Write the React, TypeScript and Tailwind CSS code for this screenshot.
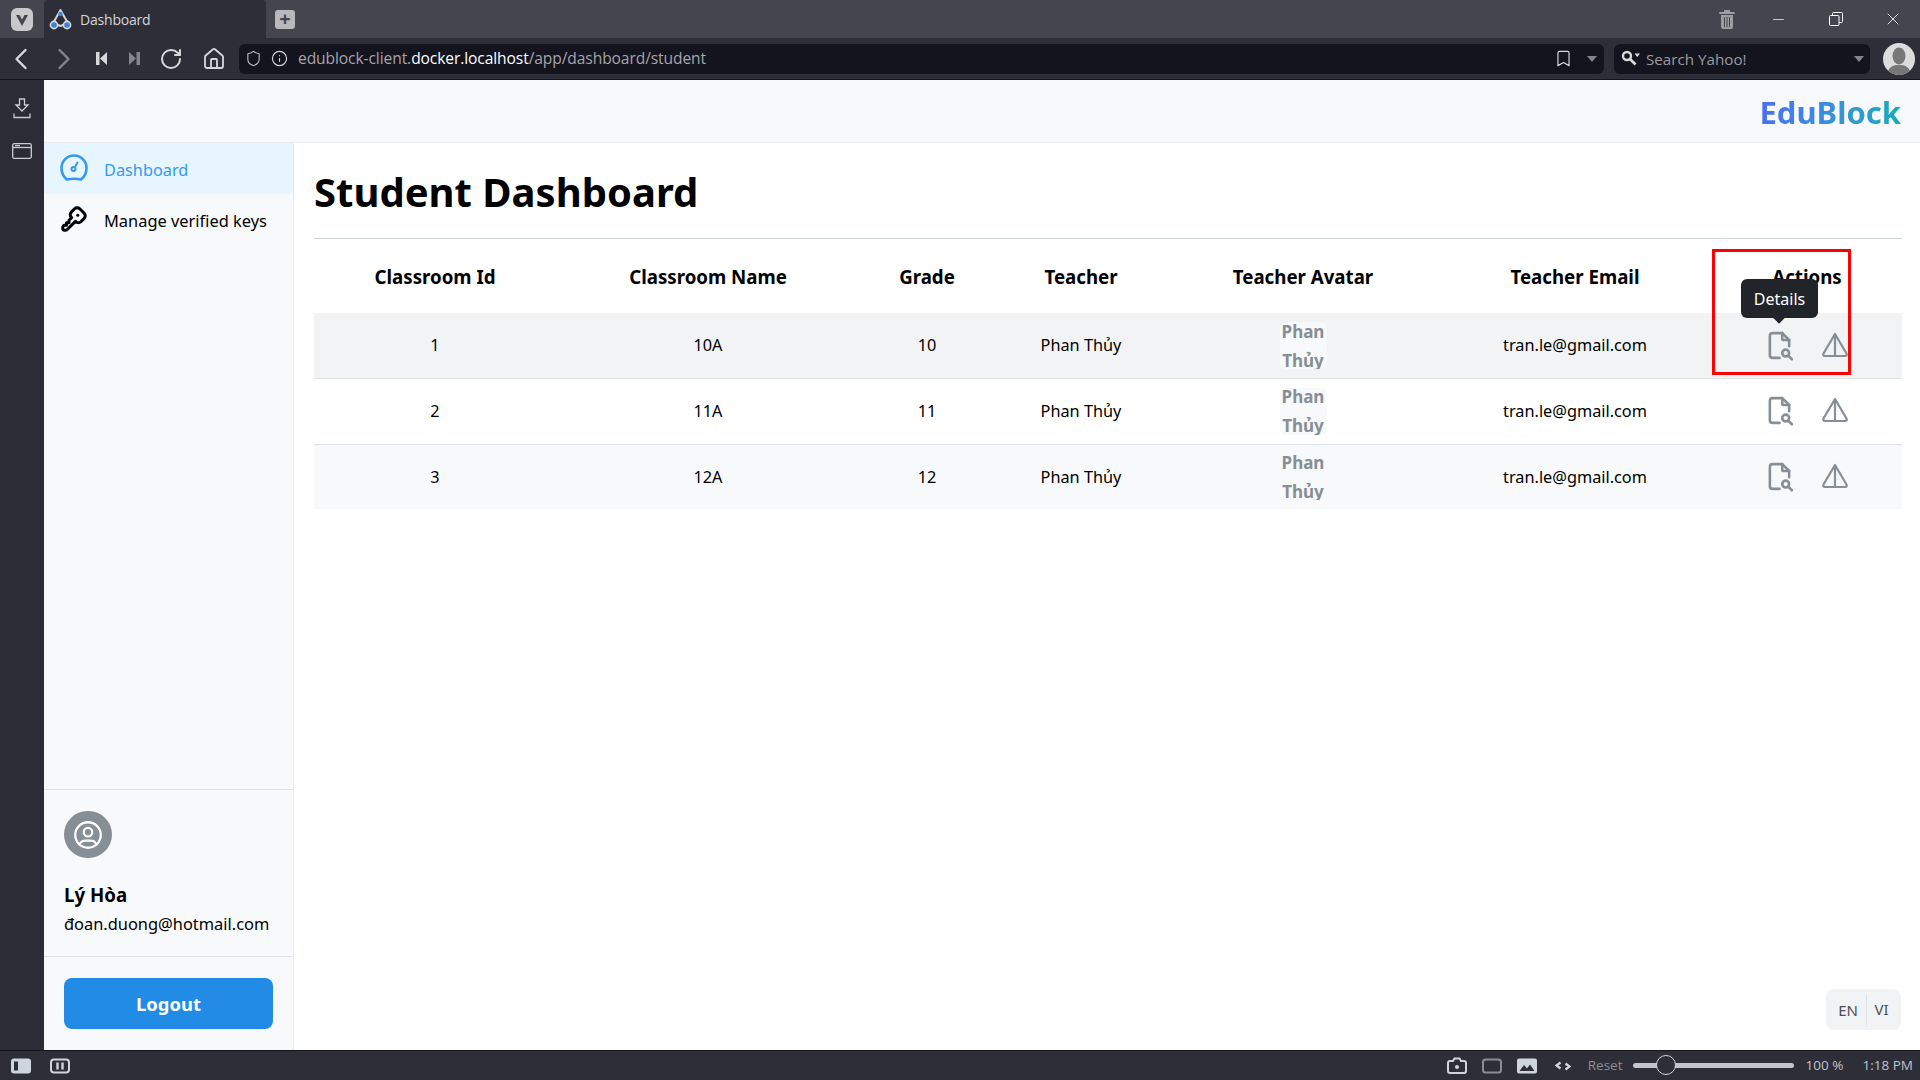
import { TbFileSearch, TbKey, TbUserCircle } from "react-icons/tb";
import {
  Bookmark,
  ChevronLeft,
  ChevronRight,
  House,
  Info,
  Minus,
  RotateCw,
  Shield,
  X,
} from "lucide-react";

const ROWS = [
  { id: 1, name: "10A", grade: 10, bg: "bg-[#f1f3f5]", h: "h-[65.5px] border-b border-[#dee2e6]" },
  { id: 2, name: "11A", grade: 11, bg: "bg-white", h: "h-[65.5px] border-b border-[#dee2e6]" },
  { id: 3, name: "12A", grade: 12, bg: "bg-[#f8f9fa]", h: "h-[65px]" },
];

const HEADERS = [
  "Classroom Id",
  "Classroom Name",
  "Grade",
  "Teacher",
  "Teacher Avatar",
  "Teacher Email",
  "Actions",
];

function TriangleIcon() {
  return (
    <svg width="28" height="28" viewBox="0 0 28 28" fill="none" stroke="#868e96" strokeWidth="2.2" strokeLinejoin="round" className="-mt-[2px]">
      <path d="M14 3 L25.5 22.5 Q26.5 25 24 25 L4 25 Q1.5 25 2.5 22.5 Z" />
      <path d="M14 3 V25" />
    </svg>
  );
}

function GaugeIcon() {
  return (
    <svg width="30" height="30" viewBox="0 0 30 30" fill="none" stroke="#339af0" strokeWidth="2.6" strokeLinecap="round" className="-mt-[2px]">
      <path d="M8 26.5 Q15 25 22 26.5 Q27.5 22.5 27.5 15 A12.5 12.5 0 0 0 2.5 15 Q2.5 22.5 8 26.5 Z" />
      <circle cx="14.5" cy="16" r="2" strokeWidth="2" />
      <path d="M16 14 L18.5 9.5" strokeWidth="2" />
    </svg>
  );
}

function TitleBar() {
  return (
    <div className="h-[38px] flex items-stretch bg-[#45454f]">
      <div className="w-[44px] flex items-center justify-center">
        <svg width="22" height="23" viewBox="0 0 22 23">
          <rect width="22" height="23" rx="6" fill="#c9c9cc" />
          <path d="M5 7 L11 18 L17 7 L13.5 7 L11 11.5 L8.5 7 Z" fill="#45454f" />
        </svg>
      </div>
      <div className="w-[222px] flex items-center bg-[#2e2e38] rounded-t-[4px] pl-[4px]">
        <svg width="25" height="23" viewBox="0 0 25 23" fill="none">
          <path d="M12.5 2 L17 10 L20 15 L12.5 18 L5 15 L8 10 Z" stroke="#d6d6da" strokeWidth="2" strokeLinejoin="round" />
          <circle cx="12.5" cy="6" r="2.2" fill="#3b82d6" />
          <circle cx="6" cy="17" r="3.6" fill="#3b82d6" stroke="#d6d6da" strokeWidth="1.6" />
          <circle cx="19" cy="17" r="3.6" fill="#3b82d6" stroke="#d6d6da" strokeWidth="1.6" />
        </svg>
        <span className="ml-[7px] text-[14px] text-[#d5d5da] font-['Open_Sans',sans-serif] tracking-[-0.2px]">Dashboard</span>
      </div>
      <div className="ml-[9px] flex items-center">
        <div className="w-[20px] h-[19px] bg-[#b9b9bd] rounded-[3px] flex items-center justify-center text-[#45454f] text-[20px] font-bold leading-none">+</div>
      </div>
      <div className="flex-1" />
      <div className="flex items-center text-white pr-[17px]">
        <svg width="18" height="21" viewBox="0 0 18 21" className="mr-[34px]" fill="#9c9ca1">
          <rect x="1" y="3" width="16" height="2" rx="1" />
          <rect x="6" y="1" width="6" height="2" />
          <path d="M3 6 H15 V18 Q15 20 13 20 H5 Q3 20 3 18 Z M6 8 V18 H7 V8 Z M8.5 8 V18 H9.5 V8 Z M11 8 V18 H12 V8 Z" fillRule="evenodd" />
        </svg>
        <Minus size={17} strokeWidth={1} className="mr-[42px]" />
        <svg width="14" height="14" viewBox="0 0 14 14" fill="none" stroke="white" strokeWidth="1" className="mr-[40px]">
          <rect x="0.5" y="3.5" width="9.5" height="10" rx="1" />
          <path d="M3.5 3.5 V1.5 Q3.5 0.5 4.5 0.5 H12.5 Q13.5 0.5 13.5 1.5 V9.5 Q13.5 10.5 12.5 10.5 H10" />
        </svg>
        <X size={20} strokeWidth={1} />
      </div>
    </div>
  );
}

function Toolbar() {
  return (
    <div className="h-[42px] flex items-center bg-[#2e2e38] text-[#d8d8dc] border-b border-[#14141e]">
      <div className="flex items-center pl-[3px] w-[239px]">
        <ChevronLeft size={36} strokeWidth={1.6} />
        <ChevronRight size={36} strokeWidth={1.6} className="ml-[7px] text-[#85858c]" />
        <svg width="12" height="15" viewBox="0 0 12 15" className="ml-[14px]" fill="#d8d8dc">
          <rect x="0" y="1" width="3.5" height="13" />
          <path d="M11 1 V14 L4 7.5 Z" />
        </svg>
        <svg width="12" height="15" viewBox="0 0 12 15" className="ml-[20px]" fill="#85858c">
          <rect x="8.5" y="1" width="3.5" height="13" />
          <path d="M1 1 V14 L8 7.5 Z" />
        </svg>
        <RotateCw size={24} strokeWidth={2} className="ml-[19px]" />
        <House size={24} strokeWidth={1.8} className="ml-[19px]" />
      </div>
      <div className="w-[1365px] h-[30px] rounded-[6px] bg-[#14141e] flex items-center pl-[6px]">
        <Shield size={17} strokeWidth={1.6} className="text-[#b8b8bd]" />
        <Info size={17} strokeWidth={1.6} className="ml-[9px] text-[#d8d8dc]" />
        <span className="ml-[10px] pt-[1px] text-[15.6px] text-[#a5a5ab] font-['Open_Sans',sans-serif] tracking-[-0.1px]">
          edublock-client.<span className="text-white">docker.localhost</span>/app/dashboard/student
        </span>
        <div className="flex-1" />
        <Bookmark size={19} strokeWidth={1.5} className="text-[#d8d8dc]" />
        <div className="ml-[14px] mr-[7px] w-0 h-0 border-x-[5px] border-t-[6px] border-x-transparent border-t-[#85858c]" />
      </div>
      <div className="ml-[10px] w-[256px] h-[30px] rounded-[6px] bg-[#14141e] flex items-center pl-[7px]">
        <svg width="20" height="18" viewBox="0 0 20 18" fill="none" stroke="#d8d8dc">
          <circle cx="6" cy="6" r="4" strokeWidth="2.4" />
          <path d="M9 9 L14.5 14.5" strokeWidth="2.6" />
          <path d="M13.5 3.5 H19 L16.25 7 Z" fill="#d8d8dc" stroke="none" />
        </svg>
        <span className="ml-[5px] pt-[1px] text-[15.2px] text-[#9a9aa0] font-['Open_Sans',sans-serif]">Search Yahoo!</span>
        <div className="flex-1" />
        <div className="mr-[6px] w-0 h-0 border-x-[5px] border-t-[6px] border-x-transparent border-t-[#85858c]" />
      </div>
      <div className="ml-[13px] w-[32px] h-[32px] rounded-full bg-[#dcdcdc] overflow-hidden">
        <svg width="32" height="32" viewBox="0 0 32 32" fill="#777">
          <ellipse cx="16" cy="13" rx="6.5" ry="8.5" />
          <path d="M4 32 Q5 23 13 22 H19 Q27 23 28 32 Z" />
        </svg>
      </div>
    </div>
  );
}

function SidePanel() {
  return (
    <div className="w-[44px] bg-[#2c2c36] flex flex-col items-center pt-[18px] text-[#c9ccd4] shrink-0">
      <svg width="18" height="21" viewBox="0 0 18 21" fill="none" stroke="#c9ccd4" strokeWidth="1.3">
        <path d="M6.5 1 H11.5 V7 H15 L9 13 L3 7 H6.5 Z" />
        <path d="M1 15.5 V19.5 H17 V15.5" />
      </svg>
      <svg width="20" height="16" viewBox="0 0 20 16" fill="none" stroke="#c9ccd4" strokeWidth="1.3" className="mt-[24px]">
        <rect x="0.7" y="0.7" width="18.6" height="14.6" rx="1.5" />
        <path d="M1 4.5 H19" />
        <path d="M3 2.6 H8" />
      </svg>
    </div>
  );
}

function StatusBar() {
  return (
    <div className="h-[30px] bg-[#2e2e38] border-t border-[#14141e] flex items-center pl-[11px] text-[#c0c3cc] font-['Open_Sans',sans-serif] shrink-0">
      <svg width="20" height="16" viewBox="0 0 20 16">
        <rect width="20" height="15" y="0.5" rx="3" fill="#cfd5df" />
        <rect x="3" y="3.5" width="4" height="9" fill="#2e2e38" />
      </svg>
      <svg width="20" height="16" viewBox="0 0 20 16" className="ml-[19px]" fill="none" stroke="#cfd5df" strokeWidth="2">
        <rect x="1" y="1.5" width="18" height="13" rx="3" />
        <path d="M7.5 4.5 V11.5 M12.5 4.5 V11.5" strokeWidth="2.4" />
      </svg>
      <div className="flex-1" />
      <svg width="20" height="17" viewBox="0 0 20 17" fill="none" stroke="#cfd5df" strokeWidth="2">
        <path d="M1 6 Q1 4 3 4 H6 L7.5 1.5 H12.5 L14 4 H17 Q19 4 19 6 V14 Q19 16 17 16 H3 Q1 16 1 14 Z" />
        <circle cx="10" cy="10" r="2" fill="#cfd5df" stroke="none" />
      </svg>
      <svg width="20" height="16" viewBox="0 0 20 16" className="ml-[15px]" fill="none" stroke="#8a8d96" strokeWidth="2">
        <rect x="1" y="1.5" width="18" height="13" rx="2.5" />
      </svg>
      <svg width="20" height="16" viewBox="0 0 20 16" className="ml-[15px]">
        <rect width="20" height="15" y="0.5" rx="2" fill="#cfd5df" />
        <path d="M2.5 13 L7 7 L10 10.5 L13 6.5 L17.5 13 Z" fill="#2e2e38" />
      </svg>
      <svg width="16" height="12" viewBox="0 0 16 12" className="ml-[18px]" fill="none" stroke="#cfd5df" strokeWidth="2.2">
        <path d="M5.5 2.5 L1.5 5.5 L5.5 8.5" />
        <path d="M10.5 3.5 L14.5 6.5 L10.5 9.5" />
      </svg>
      <span className="ml-[17px] text-[13.5px] text-[#8d8f98]">Reset</span>
      <div className="ml-[10px] relative w-[161px] h-[5px] rounded-full bg-[#c0c5cf]">
        <div className="absolute left-[23px] top-[-8px] w-[20px] h-[20px] rounded-full bg-[#2e2e38] border border-[#cfd5df]" />
      </div>
      <span className="ml-[12px] text-[13.5px] w-[40px] whitespace-nowrap">100 %</span>
      <span className="ml-[17px] mr-[7px] text-[13.5px] whitespace-nowrap">1:18 PM</span>
    </div>
  );
}

function Sidebar() {
  return (
    <aside className="w-[250px] shrink-0 flex flex-col bg-[#f8f9fa] border-r border-[#e9ecef]">
      <nav className="flex-1">
        <div className="h-[51px] flex items-center pl-[15px] bg-[#e7f5ff] text-[#339af0]">
          <GaugeIcon />
          <span className="ml-[15px] pt-[4px] text-[16.3px]">Dashboard</span>
        </div>
        <div className="h-[51px] flex items-center pl-[15px] text-black">
          <TbKey size={30} strokeWidth={2.4} className="-mt-[2px]" />
          <span className="ml-[15px] pt-[4px] text-[16.4px]">Manage verified keys</span>
        </div>
      </nav>
      <div className="border-t border-[#dee2e6] px-[20px] pt-[21px] h-[167px]">
        <div className="w-[48px] h-[47px] rounded-full bg-[#868e96] flex items-center justify-center text-white">
          <TbUserCircle size={34} strokeWidth={1.6} />
        </div>
        <div className="mt-[25px] text-[18.7px] font-bold leading-[24px] text-black">Lý Hòa</div>
        <div className="mt-[5px] text-[16.4px] leading-[24px] text-black whitespace-nowrap">đoan.duong@hotmail.com</div>
      </div>
      <div className="border-t border-[#dee2e6] px-[20px] pt-[21px] h-[94px]">
        <button className="w-[209px] h-[51px] rounded-[8px] bg-[#228be6] text-white font-bold text-[18.4px]">Logout</button>
      </div>
    </aside>
  );
}

function ClassroomTable() {
  return (
    <table className="w-full table-fixed border-collapse text-[16.3px] text-black">
      <colgroup>
        <col className="w-[242px]" />
        <col className="w-[304px]" />
        <col className="w-[134px]" />
        <col className="w-[174px]" />
        <col className="w-[270px]" />
        <col className="w-[274px]" />
        <col className="w-[190px]" />
      </colgroup>
      <thead>
        <tr className="h-[74px]">
          {HEADERS.map((h) => (
            <th key={h} className="font-bold text-[18.7px] text-center pt-[2px]">{h}</th>
          ))}
        </tr>
      </thead>
      <tbody>
        {ROWS.map((row) => (
          <tr key={row.id} className={`${row.bg} ${row.h}`}>
            <td className="text-center">{row.id}</td>
            <td className="text-center">{row.name}</td>
            <td className="text-center">{row.grade}</td>
            <td className="text-center">Phan Thủy</td>
            <td>
              <div className="mx-auto w-[47px] h-[47px] rounded-[6px] bg-[#f8f9fa] text-[#868e96] font-bold text-[17px] text-center leading-[29px] overflow-hidden flex items-center justify-center">
                <span>Phan Thủy</span>
              </div>
            </td>
            <td className="text-center">tran.le@gmail.com</td>
            <td>
              <div className="flex items-center justify-center gap-[25px] pr-[3px] text-[#868e96]">
                <TbFileSearch size={33} strokeWidth={1.9} className="-mt-[1px]" />
                <TriangleIcon />
              </div>
            </td>
          </tr>
        ))}
      </tbody>
    </table>
  );
}

export default function App() {
  return (
    <div className="h-screen w-full flex flex-col overflow-hidden bg-white font-['Noto_Sans',sans-serif]">
      <TitleBar />
      <Toolbar />
      <div className="flex-1 min-h-0 flex">
        <SidePanel />
        <div className="flex-1 flex flex-col min-w-0">
          <header className="h-[63px] shrink-0 flex items-center justify-end pr-[19px] pt-[2px] bg-[#f8f9fa] border-b border-[#e9ecef]">
            <span className="text-[31px] font-bold bg-linear-to-r from-[#4c6ef5] to-[#15aabf] bg-clip-text text-transparent">EduBlock</span>
          </header>
          <div className="flex-1 min-h-0 flex">
            <Sidebar />
            <main className="relative flex-1 min-w-0 pl-[20px] pr-[18px]">
              <h1 className="h-[96px] pt-[20px] text-[40px] leading-[58px] font-bold text-black border-b border-[#ced4da]">Student Dashboard</h1>
              <ClassroomTable />

              {/* highlight box + tooltip sit on top of the table */}
              <div className="absolute left-[1418px] top-[106px] w-[139px] h-[126px] border-[3px] border-[#ff0000]" />
              <div className="absolute left-[1447px] top-[136px] w-[77px] h-[39px] rounded-[6px] bg-[#212529] text-white text-[16px] flex items-center justify-center">
                Details
                <div className="absolute left-[34px] bottom-[-4px] w-[8px] h-[8px] rotate-45 bg-[#212529]" />
              </div>
              <div className="absolute right-[19px] bottom-[20px] w-[75px] h-[41px] rounded-[8px] bg-[#f1f3f5] flex items-center text-[15px] text-[#495057]">
                <span className="w-[41px] pl-[4px] text-center border-r border-[#dee2e6] leading-[30px]">EN</span>
                <span className="flex-1 pr-[5px] text-center">VI</span>
              </div>
            </main>
          </div>
        </div>
      </div>
      <StatusBar />
    </div>
  );
}
